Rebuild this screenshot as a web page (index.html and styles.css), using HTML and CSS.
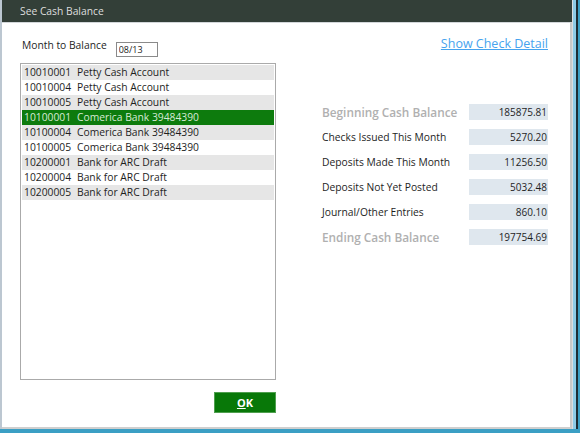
FILE: index.html
```html
<!DOCTYPE html>
<html lang="en">
<head>
    <meta charset="UTF-8">
    <meta name="viewport" content="width=device-width, initial-scale=1.0">
    <title>See Cash Balance</title>
    <link rel="stylesheet" href="styles.css">
</head>
<body>

    <div class="window">
        <div class="titlebar">See Cash Balance</div>

        <div class="dialog">
            <div class="top-row">
                <label class="month-label" for="month">Month to Balance</label>
                <input class="month-input" type="text" id="month" value="08/13">
                <a class="detail-link" href="#">Show Check Detail</a>
            </div>

            <div class="main">
                <div class="left-col">
                    <div class="acct-list">
                        <div class="acct-row"><span class="acct-code">10010001</span>Petty Cash Account</div>
                        <div class="acct-row"><span class="acct-code">10010004</span>Petty Cash Account</div>
                        <div class="acct-row"><span class="acct-code">10010005</span>Petty Cash Account</div>
                        <div class="acct-row selected"><span class="acct-code">10100001</span>Comerica Bank 39484390</div>
                        <div class="acct-row"><span class="acct-code">10100004</span>Comerica Bank 39484390</div>
                        <div class="acct-row"><span class="acct-code">10100005</span>Comerica Bank 39484390</div>
                        <div class="acct-row"><span class="acct-code">10200001</span>Bank for ARC Draft</div>
                        <div class="acct-row"><span class="acct-code">10200004</span>Bank for ARC Draft</div>
                        <div class="acct-row"><span class="acct-code">10200005</span>Bank for ARC Draft</div>
                    </div>
                    <div class="actions">
                        <button class="btn-ok"><u>O</u>K</button>
                    </div>
                </div>

                <div class="totals">
                    <div class="total-row">
                        <span class="total-label strong">Beginning Cash Balance</span>
                        <span class="total-value">185875.81</span>
                    </div>
                    <div class="total-row">
                        <span class="total-label">Checks Issued This Month</span>
                        <span class="total-value">5270.20</span>
                    </div>
                    <div class="total-row">
                        <span class="total-label">Deposits Made This Month</span>
                        <span class="total-value">11256.50</span>
                    </div>
                    <div class="total-row">
                        <span class="total-label">Deposits Not Yet Posted</span>
                        <span class="total-value">5032.48</span>
                    </div>
                    <div class="total-row">
                        <span class="total-label">Journal/Other Entries</span>
                        <span class="total-value">860.10</span>
                    </div>
                    <div class="total-row">
                        <span class="total-label strong">Ending Cash Balance</span>
                        <span class="total-value">197754.69</span>
                    </div>
                </div>
            </div>
        </div>
    </div>

</body>
</html>
```

FILE: styles.css
```css
* {
    margin: 0;
    padding: 0;
    box-sizing: border-box;
}
body {
    font-family: "Open Sans", "Noto Sans", sans-serif;
    font-size: 10.3px;
    color: #1e1e1e;
    background-color: #3b9fc4;
    width: 580px;
    height: 433px;
    overflow: hidden;
}
.window {
    width: 572px;
    height: 429px;
    border-left: 2px solid #bcc7d1;
    background-color: #fff;
    display: flex;
    flex-direction: column;
    box-shadow: 1px 0 0 #d9dde0, 4px 0 0 #8dcbe6, 6px 0 0 #1d2c33;
}
.titlebar {
    height: 22px;
    line-height: 22px;
    padding-left: 18px;
    background-color: #333f38;
    color: #dedede;
}
.dialog {
    flex: 1;
    border-top: 1px solid #d3d7da;
    border-right: 2px solid #c9c9c9;
    border-bottom: 2px solid #cfcfcf;
    padding: 13px 22px 0 18px;
}
.top-row {
    display: flex;
    align-items: flex-start;
}
.month-label {
    line-height: 14px;
    margin: 2px 0 0 2px;
}
.month-input {
    margin: 6px 0 0 9px;
    width: 42px;
    height: 15px;
    border: 1px solid #8a8a8a;
    font-family: "Open Sans", sans-serif;
    font-size: 9px;
    padding: 0 2px;
    color: #222;
}
.detail-link {
    margin-left: auto;
    font-size: 12.5px;
    line-height: 16px;
    color: #46a3ee;
    text-decoration: underline;
}
.main {
    display: flex;
    margin-top: 6px;
}
.left-col {
    width: 256px;
}
.acct-list {
    height: 317px;
    border: 1px solid #aaa;
    padding: 1px;
}
.acct-row {
    height: 15px;
    line-height: 15px;
    padding-left: 2px;
    white-space: nowrap;
}
.acct-row:nth-child(odd) {
    background-color: #e6e6e6;
}
.acct-row.selected {
    background-color: #0d7b0d;
    color: #d6ead6;
}
.acct-code {
    display: inline-block;
    width: 53px;
}
.actions {
    display: flex;
    justify-content: flex-end;
    margin-top: 12px;
}
.btn-ok {
    width: 62px;
    height: 21px;
    background-color: #087808;
    border: 1px solid #4f9f4f;
    color: #fff;
    font-family: "Open Sans", sans-serif;
    font-weight: 700;
    font-size: 11px;
}
.totals {
    flex: 1;
    margin-left: 46px;
    padding-top: 41px;
    display: flex;
    flex-direction: column;
    gap: 9px;
}
.total-row {
    display: flex;
    justify-content: space-between;
    align-items: center;
    height: 16px;
}
.total-label.strong {
    font-size: 11.8px;
    font-weight: 600;
    color: #b0b0b0;
}
.total-value {
    width: 79px;
    height: 16px;
    line-height: 16px;
    background-color: #dfe7ee;
    text-align: right;
    padding-right: 1px;
    font-size: 10px;
}
```
